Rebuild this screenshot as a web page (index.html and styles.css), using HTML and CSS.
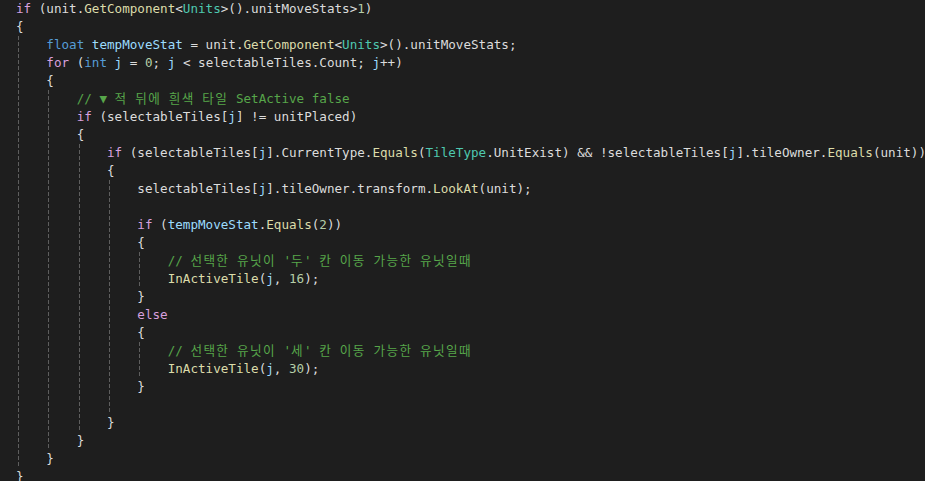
FILE: index.html
```html
<!DOCTYPE html>
<html lang="ko">
<head>
  <meta charset="UTF-8">
  <title>Editor</title>
  <link rel="stylesheet" href="styles.css">
</head>
<body>
<div class="editor">
  <div class="line"><span class="k">if</span> (unit.<span class="m">GetComponent</span>&lt;<span class="c">Units</span>&gt;().unitMoveStats&gt;<span class="n">1</span>)</div>
  <div class="line">{</div>
  <div class="line"><span class="i g"></span><span class="t">float</span> <span class="v">tempMoveStat</span> = unit.<span class="m">GetComponent</span>&lt;<span class="c">Units</span>&gt;().unitMoveStats;</div>
  <div class="line"><span class="i g"></span><span class="k">for</span> (<span class="t">int</span> <span class="v">j</span> = <span class="n">0</span>; <span class="v">j</span> &lt; selectableTiles.Count; <span class="v">j</span>++)</div>
  <div class="line"><span class="i g"></span>{</div>
  <div class="line"><span class="i g"></span><span class="i g"></span><span class="cm">// ▼ <span class="ko">적</span> <span class="ko">뒤에</span> <span class="ko">흰색</span> <span class="ko">타일</span> SetActive false</span></div>
  <div class="line"><span class="i g"></span><span class="i g"></span><span class="k">if</span> (selectableTiles[<span class="v">j</span>] != unitPlaced)</div>
  <div class="line"><span class="i g"></span><span class="i g"></span>{</div>
  <div class="line"><span class="i g"></span><span class="i g"></span><span class="i g"></span><span class="k">if</span> (selectableTiles[<span class="v">j</span>].CurrentType.<span class="m">Equals</span>(<span class="c">TileType</span>.UnitExist) &amp;&amp; !selectableTiles[<span class="v">j</span>].tileOwner.<span class="m">Equals</span>(unit))</div>
  <div class="line"><span class="i g"></span><span class="i g"></span><span class="i g"></span>{</div>
  <div class="line"><span class="i g"></span><span class="i g"></span><span class="i g"></span><span class="i g"></span>selectableTiles[<span class="v">j</span>].tileOwner.transform.<span class="m">LookAt</span>(unit);</div>
  <div class="line"><span class="i g"></span><span class="i g"></span><span class="i g"></span><span class="i g"></span></div>
  <div class="line"><span class="i g"></span><span class="i g"></span><span class="i g"></span><span class="i g"></span><span class="k">if</span> (<span class="v">tempMoveStat</span>.<span class="m">Equals</span>(<span class="n">2</span>))</div>
  <div class="line"><span class="i g"></span><span class="i g"></span><span class="i g"></span><span class="i g"></span>{</div>
  <div class="line"><span class="i g"></span><span class="i g"></span><span class="i g"></span><span class="i g"></span><span class="i g"></span><span class="cm">// <span class="ko">선택한</span> <span class="ko">유닛이</span> '<span class="ko">두</span>' <span class="ko">칸</span> <span class="ko">이동</span> <span class="ko">가능한</span> <span class="ko">유닛일때</span></span></div>
  <div class="line"><span class="i g"></span><span class="i g"></span><span class="i g"></span><span class="i g"></span><span class="i g"></span><span class="m">InActiveTile</span>(<span class="v">j</span>, <span class="n">16</span>);</div>
  <div class="line"><span class="i g"></span><span class="i g"></span><span class="i g"></span><span class="i g"></span>}</div>
  <div class="line"><span class="i g"></span><span class="i g"></span><span class="i g"></span><span class="i g"></span><span class="k">else</span></div>
  <div class="line"><span class="i g"></span><span class="i g"></span><span class="i g"></span><span class="i g"></span>{</div>
  <div class="line"><span class="i g"></span><span class="i g"></span><span class="i g"></span><span class="i g"></span><span class="i g"></span><span class="cm">// <span class="ko">선택한</span> <span class="ko">유닛이</span> '<span class="ko">세</span>' <span class="ko">칸</span> <span class="ko">이동</span> <span class="ko">가능한</span> <span class="ko">유닛일때</span></span></div>
  <div class="line"><span class="i g"></span><span class="i g"></span><span class="i g"></span><span class="i g"></span><span class="i g"></span><span class="m">InActiveTile</span>(<span class="v">j</span>, <span class="n">30</span>);</div>
  <div class="line"><span class="i g"></span><span class="i g"></span><span class="i g"></span><span class="i g"></span>}</div>
  <div class="line"><span class="i g"></span><span class="i g"></span><span class="i g"></span><span class="i g"></span></div>
  <div class="line"><span class="i g"></span><span class="i g"></span><span class="i g"></span>}</div>
  <div class="line"><span class="i g"></span><span class="i g"></span>}</div>
  <div class="line"><span class="i g"></span>}</div>
  <div class="line">}</div>
</div>
</body>
</html>
```

FILE: styles.css
```css
/* VS dark editor */
html, body {
  margin: 0;
  background-color: #1e1e1e;
  height: 100%;
  overflow: hidden;
}

.editor {
  font-family: "DejaVu Sans Mono", "Noto Sans CJK KR", monospace;
  font-size: 12.6px;
  line-height: 18px;
  color: #dcdcdc;
  padding-left: 16px;
}

.line {
  height: 18px;
  white-space: pre;
}

/* indent column, 4 spaces wide */
.i {
  display: inline-block;
  vertical-align: top;
  width: 4ch;
  height: 18px;
}

/* dashed indent guide */
.i.g {
  background-image: repeating-linear-gradient(to bottom, #5e5e5e 0 4px, transparent 4px 6px);
  background-size: 1px 100%;
  background-repeat: no-repeat;
  background-position: 2px 0;
}

.k { color: #d8a0df; }
.t { color: #569cd6; }
.c { color: #4ec9b0; }
.m { color: #dcdcaa; }
.v { color: #9cdcfe; }
.n { color: #b5cea8; }
.cm { color: #57a64a; }

.ko {
  letter-spacing: 1.4px;
}
```
